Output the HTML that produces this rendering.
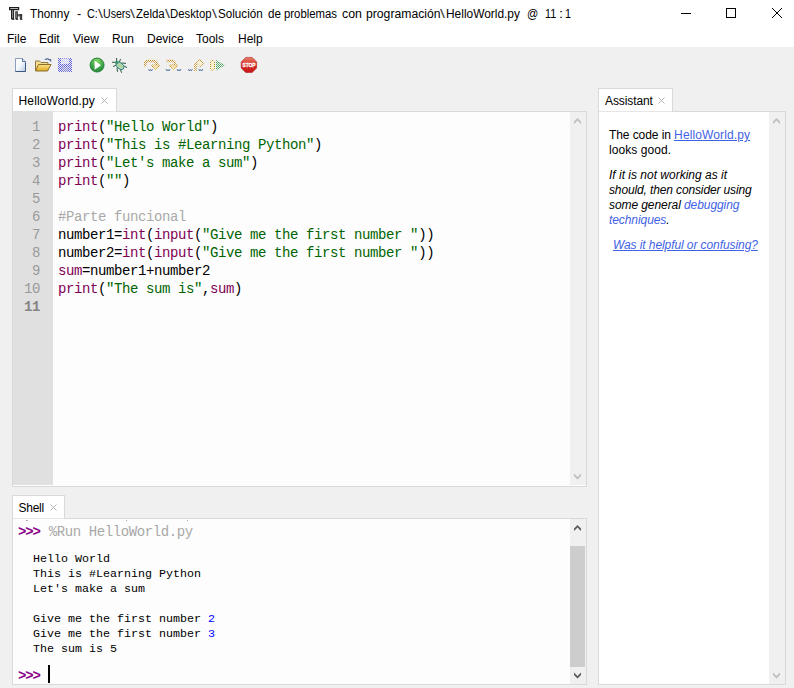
<!DOCTYPE html>
<html lang="es">
<head>
<meta charset="utf-8">
<title>Thonny</title>
<style>
*{box-sizing:border-box;margin:0;padding:0}
html,body{width:794px;height:688px;overflow:hidden}
body{position:relative;background:#f0f0f0;font-family:"Liberation Sans",sans-serif;font-size:12px;color:#000}
.abs{position:absolute}
.t{position:absolute;white-space:pre;line-height:16px;height:16px}
#top{left:0;top:0;width:794px;height:47px;background:#fff}
.tab{position:absolute;background:#fff;border:1px solid #d9d9d9;border-bottom:none}
.frame{position:absolute;background:#fff;border:1px solid #d9d9d9}
.tw{position:absolute;top:0;transform-origin:0 0;display:inline-block}
.x{position:absolute;width:7px;height:7px}
.mono{font-family:"Liberation Mono",monospace}
#code{left:58px;top:118px;font-size:14px;letter-spacing:-0.4px;line-height:18px;white-space:pre}
#nums{left:13px;top:118px;width:27px;text-align:right;font-size:14px;letter-spacing:-0.4px;line-height:18px;color:#999;white-space:pre}
.shp{font-size:14px;letter-spacing:-0.4px;line-height:18px;white-space:pre}
.lk{color:#3f62e4}.u{text-decoration:underline}.i{font-style:italic}
.b{color:#7f0055}.s{color:#006400}.c{color:#a9a9a9}
#shell{font-size:11.67px;line-height:15px;white-space:pre}
.sb{position:absolute;background:#f0f0f0;width:16px}
</style>
</head>
<body>
<div id="top" class="abs"></div>

<!-- title -->
<svg class="abs" style="left:0;top:0" width="30" height="24" viewBox="0 0 30 24">
<rect x="9" y="7" width="10.2" height="3.2" fill="#1c1c1c"/>
<rect x="10.2" y="8.1" width="7.8" height="0.9" fill="#c4c4c4"/>
<rect x="11" y="10" width="3.1" height="9.2" fill="#222"/>
<rect x="12.1" y="10" width="1" height="8.2" fill="#8a8a8a"/>
<rect x="11.8" y="19" width="2.6" height="0.8" fill="#222"/>
<rect x="15.3" y="11.3" width="2.5" height="7.9" fill="#222"/>
<rect x="16.3" y="12.4" width="0.7" height="5.8" fill="#888"/>
<rect x="17.5" y="14.3" width="4.6" height="2" fill="#2a2a2a"/>
<rect x="18" y="15" width="3" height="0.6" fill="#999"/>
<rect x="19.8" y="14.3" width="2.3" height="4.9" fill="#222"/>
<rect x="20.6" y="15.4" width="0.7" height="3" fill="#888"/>
<rect x="15.9" y="19" width="2.3" height="0.8" fill="#222"/>
<rect x="20.2" y="19" width="2.2" height="0.8" fill="#222"/>
</svg>
<div id="title" class="abs" style="left:0;top:6px;height:16px;line-height:16px;white-space:pre"><span class="tw" style="left:29.85px;transform:scaleX(0.981)">Thonny</span> <span class="tw" style="left:76.88px;transform:scaleX(1.033)">-</span> <span class="tw" style="left:86.95px;transform:scaleX(0.895)">C:</span><span class="tw" style="left:97.60px;transform:scaleX(1.500);color:#444">\</span><span class="tw" style="left:102.92px;transform:scaleX(0.883)">Users</span><span class="tw" style="left:130.30px;transform:scaleX(1.500);color:#444">\</span><span class="tw" style="left:135.62px;transform:scaleX(0.956)">Zelda</span><span class="tw" style="left:164.70px;transform:scaleX(1.500);color:#444">\</span><span class="tw" style="left:169.86px;transform:scaleX(0.944)">Desktop</span><span class="tw" style="left:211.60px;transform:scaleX(1.500);color:#444">\</span><span class="tw" style="left:218.31px;transform:scaleX(0.972)">Solución</span> <span class="tw" style="left:267.61px;transform:scaleX(0.971)">de</span> <span class="tw" style="left:284.49px;transform:scaleX(0.946)">problemas</span> <span class="tw" style="left:342.08px;transform:scaleX(1.033)">con</span> <span class="tw" style="left:365.64px;transform:scaleX(1.016)">programación</span><span class="tw" style="left:439.60px;transform:scaleX(1.500);color:#444">\</span><span class="tw" style="left:445.81px;transform:scaleX(0.993)">HelloWorld.py</span> <span class="tw" style="left:527.07px;transform:scaleX(0.927)">@</span> <span class="tw" style="left:544.70px;transform:scaleX(0.900)">11</span> <span class="tw" style="left:559.00px;transform:scaleX(1.200)">:</span> <span class="tw" style="left:565.20px;transform:scaleX(0.900)">1</span></div>

<!-- window buttons -->
<svg class="abs" style="left:676px;top:4px" width="112" height="20" viewBox="0 0 112 20">
<path d="M5 9.5h10" stroke="#000" stroke-width="1" fill="none"/>
<rect x="50.5" y="4.5" width="9" height="9" stroke="#000" stroke-width="1" fill="none"/>
<path d="M96 4l10 10M106 4l-10 10" stroke="#000" stroke-width="1" fill="none"/>
</svg>

<!-- menu -->
<div class="t" style="left:7px;top:31px">File</div>
<div class="t" style="left:39px;top:31px">Edit</div>
<div class="t" style="left:73px;top:31px">View</div>
<div class="t" style="left:112px;top:31px">Run</div>
<div class="t" style="left:147px;top:31px">Device</div>
<div class="t" style="left:196px;top:31px">Tools</div>
<div class="t" style="left:238px;top:31px">Help</div>

<!-- toolbar icons placeholder -->
<svg id="tb" class="abs" style="left:0;top:50px" width="270" height="30" viewBox="0 50 270 30">
<defs>
<pattern id="dB" width="2" height="2" patternUnits="userSpaceOnUse"><rect x="0" y="0" width="1" height="1" fill="#2a2ad0"/><rect x="1" y="1" width="1" height="1" fill="#2a2ad0"/></pattern>
<pattern id="dO" width="2" height="2" patternUnits="userSpaceOnUse"><rect x="0" y="0" width="1" height="1" fill="#c08a28"/><rect x="1" y="1" width="1" height="1" fill="#d8a848"/></pattern>
<pattern id="dG" width="2" height="2" patternUnits="userSpaceOnUse"><rect x="0" y="0" width="1" height="1" fill="#3a9a50"/><rect x="1" y="1" width="1" height="1" fill="#58b070"/></pattern>
<pattern id="dY" width="2" height="2" patternUnits="userSpaceOnUse"><rect x="0" y="0" width="1" height="1" fill="#e8d070"/><rect x="1" y="1" width="1" height="1" fill="#f0e098"/></pattern>
<linearGradient id="gPage" x1="0" y1="0" x2="1" y2="1"><stop offset="0" stop-color="#fff"/><stop offset="0.5" stop-color="#f4f7fc"/><stop offset="1" stop-color="#b4c6e4"/></linearGradient>
<linearGradient id="gFold" x1="0" y1="0" x2="0" y2="1"><stop offset="0" stop-color="#fbe48a"/><stop offset="1" stop-color="#e2a820"/></linearGradient>
<radialGradient id="gRun" cx="0.5" cy="0.25" r="0.8"><stop offset="0" stop-color="#86d868"/><stop offset="0.6" stop-color="#3ea248"/><stop offset="1" stop-color="#1f8434"/></radialGradient>
<linearGradient id="gStop" x1="0" y1="0" x2="0" y2="1"><stop offset="0" stop-color="#e8806c"/><stop offset="0.45" stop-color="#d83028"/><stop offset="1" stop-color="#c41818"/></linearGradient>
</defs>
<!-- new -->
<path d="M15.5 58.5h7l3 3v10h-10z" fill="url(#gPage)" stroke="#8c9fbe" stroke-width="1"/>
<path d="M22.5 58.5v3h3" fill="#dfe8f6" stroke="#4a648a" stroke-width="0.9"/>
<path d="M15.5 71.5h10v-9" fill="none" stroke="#3c5880" stroke-width="1"/>
<!-- open -->
<path d="M35.5 70.5v-9.5h4l1.5 1.5h7v2" fill="#f3dc8c" stroke="#8d7a4a" stroke-width="1"/>
<path d="M38.5 64.5h12.5l-3.5 6.5h-12z" fill="url(#gFold)" stroke="#8a6d28" stroke-width="1"/>
<path d="M44.8 59.6c1.6-1 3.6-0.9 4.8 0.4" fill="none" stroke="#4a6a9c" stroke-width="1.1"/>
<path d="M48.3 59.2h2.9v2.9z" fill="#3f5f94"/>
<!-- save (disabled) -->
<rect x="58" y="58" width="14" height="14" fill="url(#dB)" opacity="0.72"/>
<rect x="61" y="58.5" width="8" height="5.5" fill="#f2f3f8"/>
<rect x="61" y="58" width="8" height="6" fill="url(#dB)" opacity="0.18"/>
<rect x="62" y="67" width="6" height="5" fill="#d9d9de" opacity="0.8"/>
<rect x="62" y="67" width="6" height="5" fill="url(#dB)" opacity="0.35"/>
<!-- run -->
<circle cx="97.05" cy="65.05" r="7" fill="url(#gRun)" stroke="#1c7c30" stroke-width="0.9"/>
<path d="M94.6 60.6v9.2l6.4-4.6z" fill="#fff"/>
<!-- debug -->
<g stroke="#2d5b3c" stroke-width="1" fill="none" stroke-linecap="round">
<path d="M116.6 62v-3.6M119.4 62.2l1-2.9M116 62.4l-3.6-0.2M116.6 65l-3.2 1.4M122 63l3.6 0.4M124 66l2.7 1.4M117 68l0.5 3.4M120.5 70l1 2.4"/>
</g>
<ellipse cx="120" cy="65.8" rx="4.6" ry="3" transform="rotate(42 120 65.8)" fill="#b9dcae" stroke="#2a7888" stroke-width="0.9"/>
<path d="M118 64.5l3.5 3.5M119.5 63.8l3 3" stroke="#8fc48a" stroke-width="0.7"/>
<circle cx="116.8" cy="62.6" r="1.4" fill="#3f9c50" stroke="#2a7888" stroke-width="0.5"/>
<!-- step over (disabled) -->
<path d="M145.1 66.6v-2.2q0-3.3 3.4-3.3h4.8q3.6 0 3.6 3.3v0.8" fill="none" stroke="url(#dO)" stroke-width="2.5"/>
<path d="M151.5 65h8l-4 5.5z" fill="#f6e6b4" stroke="url(#dO)" stroke-width="1"/>
<path d="M148.5 69l1 2 1-1.5 1 1.5 1-2" fill="none" stroke="#45689c" stroke-width="0.8"/>
<!-- step into -->
<path d="M166.5 61h6.5l2 2v2" fill="none" stroke="url(#dO)" stroke-width="2.4"/>
<path d="M169.5 65h8l-4 5.5z" fill="#f6e6b4" stroke="url(#dO)" stroke-width="1"/>
<path d="M166 69l1 2 1-1.5 1 1.5 1-2M177 69l1 2 1-1.5 1 1.5 1-2" fill="none" stroke="#45689c" stroke-width="0.8"/>
<!-- step out -->
<path d="M195.5 71v-8" fill="none" stroke="url(#dO)" stroke-width="2.4"/>
<path d="M199.8 59.8l3.5 3.5-3.5 3.5-3.5-3.5z" fill="#f8f0dc" stroke="url(#dO)" stroke-width="1.1"/>
<path d="M188.3 69l1 2 1-1.5 1 1.5 1-2M198.8 69l1 2 1-1.5 1 1.5 1-2" fill="none" stroke="#45689c" stroke-width="0.8"/>
<!-- resume -->
<rect x="210.5" y="60.5" width="4" height="9.6" rx="1.3" fill="#f7f0cc" stroke="url(#dO)" stroke-width="1"/>
<path d="M216 60.1v10.4l9.2-5.2z" fill="url(#dG)" opacity="0.9"/>
<!-- stop -->
<path d="M245.7 57.4h6.4l4.5 4.5v6.2l-4.5 4.4h-6.4l-4.5-4.4v-6.2z" fill="url(#gStop)" stroke="#b42222" stroke-width="0.6"/>
<text x="249" y="67.1" font-family="Liberation Sans, sans-serif" font-weight="bold" font-size="5.7" fill="#fff" stroke="#fff" stroke-width="0.3" text-anchor="middle" textLength="13.2" lengthAdjust="spacingAndGlyphs">STOP</text>
</svg>

<!-- editor notebook -->
<div class="frame" style="left:12px;top:111px;width:575px;height:376px;background:#fdfdfd"></div>
<div class="tab" style="left:12px;top:88px;width:105px;height:23px"></div><div class="abs" style="left:13px;top:111px;width:103px;height:1px;background:#e6e6e6"></div>
<div class="t" id="tab1" style="left:18.5px;letter-spacing:0.15px;top:93px">HelloWorld.py</div>
<svg class="x" style="left:100.5px;top:97px" viewBox="0 0 7 7"><path d="M0.5 0.5l6 6M6.5 0.5l-6 6" stroke="#a8a8a8" stroke-width="0.9" fill="none"/></svg>
<div class="abs" style="left:13px;top:111px;width:40px;height:374px;background:#e0e0e0"></div>
<div class="sb" style="left:570px;top:112px;height:373px"></div>
<svg class="abs" style="left:570px;top:112px" width="16" height="16" viewBox="0 0 16 16"><path d="M7.5 6L4 9.5V12L7.5 8.5L11 12V9.5Z" fill="#bebebe"/></svg><svg class="abs" style="left:570px;top:469px" width="16" height="16" viewBox="0 0 16 16"><path d="M7.5 10.6L4 7.1V4.6L7.5 8.1L11 4.6V7.1Z" fill="#bebebe"/></svg>

<div id="nums" class="abs mono"> 1
 2
 3
 4
 5
 6
 7
 8
 9
10
<b style="color:#858585">11</b></div>
<div id="code" class="abs mono"><span class="b">print</span>(<span class="s">"Hello World"</span>)
<span class="b">print</span>(<span class="s">"This is #Learning Python"</span>)
<span class="b">print</span>(<span class="s">"Let's make a sum"</span>)
<span class="b">print</span>(<span class="s">""</span>)

<span class="c">#Parte funcional</span>
number1=<span class="b">int</span>(<span class="b">input</span>(<span class="s">"Give me the first number "</span>))
number2=<span class="b">int</span>(<span class="b">input</span>(<span class="s">"Give me the first number "</span>))
<span class="b">sum</span>=number1+number2
<span class="b">print</span>(<span class="s">"The sum is"</span>,<span class="b">sum</span>)
</div>

<!-- shell notebook -->
<div class="frame" style="left:12px;top:518px;width:575px;height:167px;background:#fdfdfd"></div>
<div class="tab" style="left:12px;top:495px;width:53px;height:23px"></div><div class="abs" style="left:13px;top:518px;width:51px;height:1px;background:#e6e6e6"></div>
<div class="t" id="tab2" style="left:18.5px;letter-spacing:-0.25px;top:500px">Shell</div>
<svg class="x" style="left:49.6px;top:503.8px" viewBox="0 0 7 7"><path d="M0.5 0.5l6 6M6.5 0.5l-6 6" stroke="#a8a8a8" stroke-width="0.9" fill="none"/></svg>
<div class="sb" style="left:570px;top:519px;height:165px"></div>
<div class="abs" style="left:570px;top:546px;width:15px;height:121px;background:#cdcdcd"></div>
<svg class="abs" style="left:570px;top:519px" width="16" height="16" viewBox="0 0 16 16"><path d="M7.5 6L4 9.5V12L7.5 8.5L11 12V9.5Z" fill="#5a5a5a"/></svg><svg class="abs" style="left:570px;top:668px" width="16" height="16" viewBox="0 0 16 16"><path d="M7.5 10.6L4 7.1V4.6L7.5 8.1L11 4.6V7.1Z" fill="#5a5a5a"/></svg>

<div class="abs" style="left:26px;top:520px;width:2px;height:1px;background:#aaa"></div><div class="abs" style="left:126px;top:520px;width:1px;height:1px;background:#aaa"></div><div class="abs" style="left:187px;top:520px;width:1px;height:1px;background:#aaa"></div>
<div class="abs mono shp" style="left:18px;top:523px"><b style="color:#8b008b;letter-spacing:-1.1px;margin-right:0.9px">&gt;&gt;&gt;</b> <span style="color:#a9a9a9">%Run HelloWorld.py</span></div>
<div id="shell" class="abs mono" style="left:33px;top:552px">Hello World
This is #Learning Python
Let's make a sum

Give me the first number <span style="color:#00f">2</span>
Give me the first number <span style="color:#00f">3</span>
The sum is 5</div>
<div class="abs mono shp" style="left:18px;top:666.5px"><b style="color:#8b008b;letter-spacing:-1.1px">&gt;&gt;&gt;</b></div>
<div class="abs" style="left:48px;top:665px;width:2px;height:18px;background:#000"></div>

<!-- assistant -->
<div class="frame" style="left:598px;top:111px;width:188px;height:574px"></div>
<div class="tab" style="left:598px;top:88px;width:75px;height:23px"></div><div class="abs" style="left:599px;top:111px;width:73px;height:1px;background:#e6e6e6"></div>
<div class="t" id="tab3" style="left:605px;letter-spacing:-0.1px;top:93px">Assistant</div>
<svg class="x" style="left:657.7px;top:96.6px" viewBox="0 0 7 7"><path d="M0.5 0.5l6 6M6.5 0.5l-6 6" stroke="#a8a8a8" stroke-width="0.9" fill="none"/></svg>
<div class="sb" style="left:769px;top:112px;height:572px"></div>
<svg class="abs" style="left:769px;top:112px" width="16" height="16" viewBox="0 0 16 16"><path d="M7.5 6L4 9.5V12L7.5 8.5L11 12V9.5Z" fill="#bebebe"/></svg><svg class="abs" style="left:769px;top:668px" width="16" height="16" viewBox="0 0 16 16"><path d="M7.5 10.6L4 7.1V4.6L7.5 8.1L11 4.6V7.1Z" fill="#bebebe"/></svg>

<div class="t" id="a1" style="left:609px;top:127px"><span style="letter-spacing:-0.08px">The code in </span><span class="lk u" style="letter-spacing:0.12px">HelloWorld.py</span></div>
<div class="t" id="a2" style="letter-spacing:0.08px;left:609px;top:142px">looks good.</div>
<div class="t i" id="a3" style="left:609px;top:167px">If it is not working as it</div>
<div class="t i" id="a4" style="letter-spacing:-0.13px;left:609px;top:182px">should, then consider using</div>
<div class="t i" id="a5" style="letter-spacing:-0.08px;left:609px;top:197px">some general <span class="lk">debugging</span></div>
<div class="t i" id="a6" style="letter-spacing:-0.08px;left:609px;top:212px"><span class="lk">techniques</span>.</div>
<div class="t i lk u" id="a7" style="letter-spacing:-0.085px;left:613px;top:237px">Was it helpful or confusing?</div>

</body>
</html>
